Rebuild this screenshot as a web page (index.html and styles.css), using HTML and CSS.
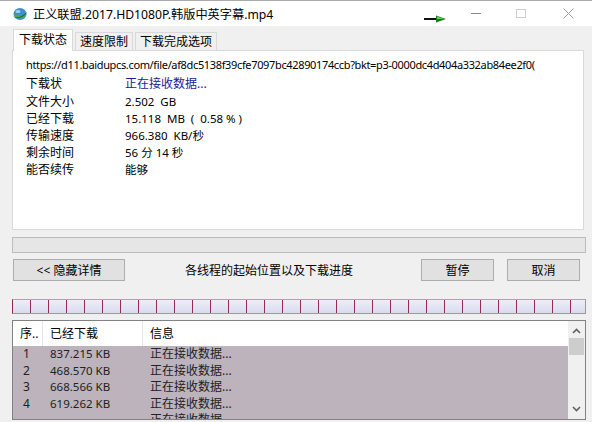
FILE: index.html
```html
<!DOCTYPE html>
<html>
<head>
<meta charset="utf-8">
<link rel="stylesheet" href="styles.css">
</head>
<body>
<div class="window">
  <div class="titlebar">
    <svg class="app-icon" width="16" height="16" viewBox="0 0 16 16">
      <ellipse cx="8" cy="8" rx="6.5" ry="6" fill="#3f8fd0"/>
      <path d="M2 8 A6.5 6 0 0 0 14.5 8 Q10 11 6 9 Q3.5 8 2 8Z" fill="#4caf3c"/>
      <path d="M1 10 Q6 14 15 6 Q12 12 5 12 Q2 11.5 1 10Z" fill="#2d6a2a"/>
      <ellipse cx="6" cy="5.5" rx="2.5" ry="1.6" fill="#9fd3f5"/>
    </svg>
    <span class="title">正义联盟.2017.HD1080P.韩版中英字幕.mp4</span>
    <svg class="arrow" width="24" height="8" viewBox="0 0 24 8">
      <rect x="0" y="3" width="13" height="2" fill="#111"/>
      <path d="M12 0.5 L22 4 L12 7.5Z" fill="#1c7a1c"/>
      <path d="M13 1.5 L20 4 L13 4Z" fill="#5fd35f"/>
    </svg>
    <div class="controls">
      <span class="ctl ctl-min"></span>
      <span class="ctl ctl-max"></span>
      <svg class="ctl-close" width="11" height="11" viewBox="0 0 11 11">
        <path d="M0.5 0.5 L10.5 10.5 M10.5 0.5 L0.5 10.5" stroke="#a0a0a0" stroke-width="1"/>
      </svg>
    </div>
  </div>

  <div class="main">
    <div class="tabs">
      <div class="tab active">下载状态</div>
      <div class="tab">速度限制</div>
      <div class="tab">下载完成选项</div>
    </div>
    <div class="panel">
      <div class="url">https://d11.baidupcs.com/file/af8dc5138f39cfe7097bc42890174ccb?bkt=p3-0000dc4d404a332ab84ee2f0(</div>
      <div class="row status"><span class="label">下载状</span><span class="value blue">正在接收数据...</span></div>
      <div class="row"><span class="label">文件大小</span><span class="value">2.502  GB</span></div>
      <div class="row"><span class="label">已经下载</span><span class="value">15.118  MB  (  0.58 % )</span></div>
      <div class="row"><span class="label">传输速度</span><span class="value">966.380  KB/秒</span></div>
      <div class="row"><span class="label">剩余时间</span><span class="value">56 分 14 秒</span></div>
      <div class="row"><span class="label">能否续传</span><span class="value">能够</span></div>
    </div>

    <div class="progress"></div>

    <div class="actions">
      <button class="btn btn-wide">&lt;&lt; 隐藏详情</button>
      <span class="hint">各线程的起始位置以及下载进度</span>
      <span class="spacer"></span>
      <button class="btn">暂停</button>
      <button class="btn">取消</button>
    </div>

    <div class="segments"></div>

    <div class="list">
      <div class="list-body">
        <div class="list-head">
          <span class="c1">序..</span><span class="c2">已经下载</span><span class="c3">信息</span>
        </div>
        <div class="list-row"><span class="c1">1</span><span class="c2">837.215 KB</span><span class="c3">正在接收数据...</span></div>
        <div class="list-row"><span class="c1">2</span><span class="c2">468.570 KB</span><span class="c3">正在接收数据...</span></div>
        <div class="list-row"><span class="c1">3</span><span class="c2">668.566 KB</span><span class="c3">正在接收数据...</span></div>
        <div class="list-row"><span class="c1">4</span><span class="c2">619.262 KB</span><span class="c3">正在接收数据...</span></div>
        <div class="list-row"><span class="c1"></span><span class="c2"></span><span class="c3">正在接收数据...</span></div>
      </div>
      <div class="scrollbar">
        <svg class="sb-arrow" width="9" height="6" viewBox="0 0 9 6"><path d="M1 5 L4.5 1.5 L8 5" fill="none" stroke="#606060" stroke-width="1.6"/></svg>
        <div class="sb-thumb"></div>
        <div class="sb-track"></div>
        <svg class="sb-arrow" width="9" height="6" viewBox="0 0 9 6"><path d="M1 1 L4.5 4.5 L8 1" fill="none" stroke="#606060" stroke-width="1.6"/></svg>
      </div>
    </div>
  </div>
</div>
</body>
</html>
```

FILE: styles.css
```css
* { box-sizing: border-box; }
html, body {
  margin: 0;
  padding: 0;
  width: 592px;
  height: 422px;
  overflow: hidden;
  background: #f0f0f0;
  font-family: "Noto Sans", "Noto Sans CJK SC", sans-serif;
  font-size: 12px;
  color: #000;
}
.window {
  width: 592px;
  height: 422px;
  display: flex;
  flex-direction: column;
  overflow: hidden;
}
.titlebar {
  height: 26px;
  flex: none;
  background: #fff;
  border-top: 1px solid #a9a9a9;
  display: flex;
  align-items: center;
  padding-left: 12px;
}
.app-icon { flex: none; margin-top: 1px; }
.title {
  margin-left: 5px;
  font-size: 12.2px;
  color: #000;
  white-space: nowrap;
}
.arrow {
  margin-left: 151px;
  margin-top: 10px;
  flex: none;
}
.controls {
  margin-left: auto;
  display: flex;
  align-items: center;
  height: 100%;
}
.ctl { display: block; flex: none; }
.ctl-min {
  width: 10px;
  height: 1px;
  background: #8a8a8a;
  margin-right: 35px;
}
.ctl-max {
  width: 10px;
  height: 9px;
  border: 1px solid #d0d0d0;
  margin-right: 37px;
}
.ctl-close { flex: none; margin-right: 18px; }

.main {
  flex: 1;
  padding: 3px 6px 0 12px;
  display: flex;
  flex-direction: column;
}
.tabs {
  display: flex;
  align-items: flex-end;
  height: 21px;
  padding-left: 1px;
}
.tab {
  height: 18px;
  line-height: 17px;
  padding: 0 4px;
  border: 1px solid #d9d9d9;
  border-bottom: none;
  background: #f0f0f0;
  margin-right: 2px;
  white-space: nowrap;
}
.tab.active {
  height: 22px;
  line-height: 20px;
  background: #fff;
  margin-right: 2px;
  margin-bottom: -1px;
  position: relative;
  z-index: 1;
  padding: 0 5px;
}
.panel {
  width: 572px;
  height: 180px;
  background: #fff;
  border: 1px solid #d9d9d9;
  padding: 5px 0 0 13px;
  flex: none;
}
.url {
  line-height: 17px;
  height: 17px;
  width: 515px;
  overflow: hidden;
  white-space: nowrap;
  font-size: 11px;
  letter-spacing: -0.35px;
  margin-bottom: 2px;
}
.row {
  display: flex;
  line-height: 17px;
  height: 17px;
  white-space: pre;
}
.row.status { margin-bottom: 1px; }
.label { width: 99px; flex: none; }
.value { font-size: 11.5px; }
.blue { color: #1a1a96; font-size: 12px; }

.progress {
  margin-top: 7px;
  width: 574px;
  height: 16px;
  background: #e6e6e6;
  border: 1px solid #bcbcbc;
  flex: none;
}
.actions {
  margin-top: 6px;
  height: 22px;
  display: flex;
  align-items: center;
  width: 574px;
  flex: none;
}
.btn {
  font: inherit;
  height: 22px;
  width: 73px;
  padding: 0;
  background: #e1e1e1;
  border: 1px solid #adadad;
  color: #000;
  flex: none;
}
.btn-wide { width: 112px; margin-left: 1px; }
.btn + .btn { margin-left: 13px; }
.hint { margin-left: 60px; white-space: nowrap; }
.spacer { flex: 1; }
.actions .btn:last-child { margin-right: 6px; }

.segments {
  margin-top: 18px;
  width: 574px;
  height: 15px;
  flex: none;
  border: 1px solid #9a9a9a;
  border-left: 1px solid #8a2a44;
  border-top-color: #b0a0b0;
  background:
    repeating-linear-gradient(to right, transparent 0 17px, #9c2a4c 17px 18px),
    linear-gradient(#eeeef8, #d9dbee);
}
.list {
  margin-top: 6px;
  width: 574px;
  height: 100px;
  border: 1px solid #828282;
  display: flex;
  background: #fff;
  flex: none;
  overflow: hidden;
}
.list-body {
  flex: 1;
  overflow: hidden;
}
.list-head {
  height: 25px;
  display: flex;
  align-items: center;
  background: #fff;
  font-size: 12px;
  margin-right: 5px;
}
.list-head span { height: 25px; line-height: 25px; }
.c1 { width: 30px; padding-left: 7px; flex: none; white-space: nowrap; }
.c2 { width: 100px; padding-left: 7px; flex: none; white-space: nowrap; }
.c3 { flex: 1; padding-left: 7px; white-space: nowrap; }
.list-head .c1, .list-head .c2 { border-right: 1px solid #e5e5e5; }
.list-row {
  display: flex;
  height: 16.5px;
  line-height: 16.5px;
  background: #bcb3bc;
  color: #222;
}
.list-row .c1 { padding-left: 10px; }
.list-row .c2 { font-size: 11.5px; }
.scrollbar {
  width: 17px;
  flex: none;
  background: #f0f0f0;
  display: flex;
  flex-direction: column;
  align-items: center;
}
.sb-arrow { flex: none; margin: 7px 0 4px; }
.sb-thumb {
  width: 15px;
  height: 17px;
  background: #cdcdcd;
  flex: none;
}
.sb-track { flex: 1; }
.scrollbar .sb-arrow:last-child { margin: 3px 0 7px; }
```
